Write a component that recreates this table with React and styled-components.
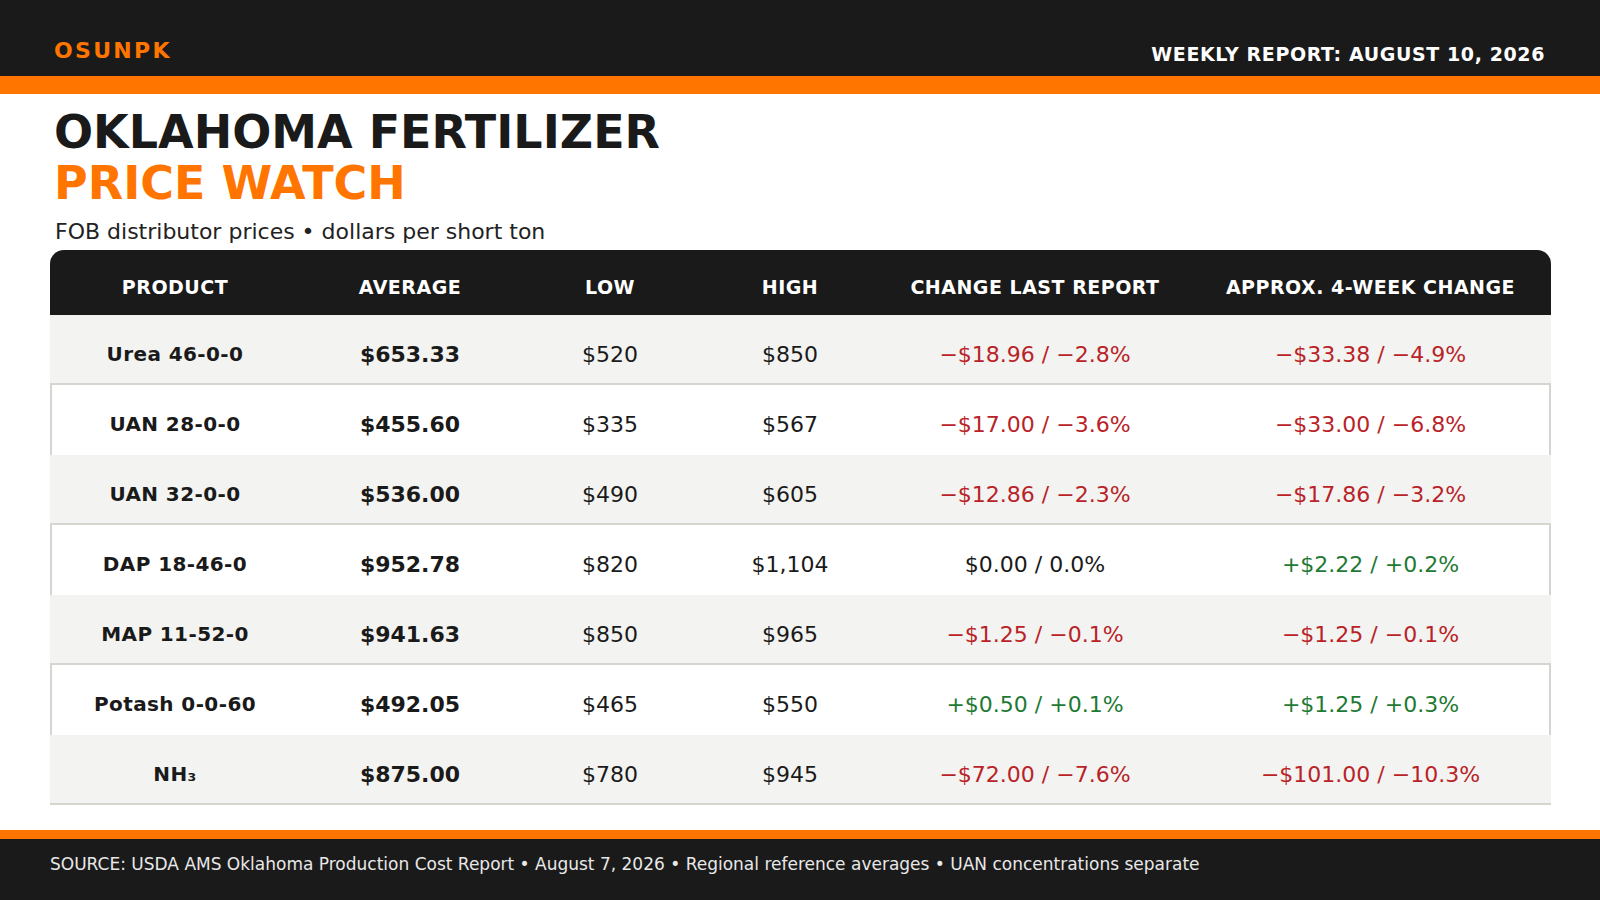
import React from 'react';
import styled, { createGlobalStyle } from 'styled-components';

const GlobalStyle = createGlobalStyle`
  * { box-sizing: border-box; }
  html, body { margin: 0; padding: 0; background: #ffffff; }
  body { font-family: "DejaVu Sans", Verdana, sans-serif; color: #1a1a1a; }
`;

const COLS = '250fr 220fr 180fr 180fr 310fr 361fr';

const tones = {
  down: '#b92328',
  up: '#1f7a34',
  flat: '#1a1a1a',
};

const Page = styled.div`
  width: 1600px;
  height: 900px;
  display: flex;
  flex-direction: column;
`;

const TopBar = styled.header`
  height: 94px;
  background: #1a1a1a;
  border-bottom: 18px solid #ff7500;
  display: flex;
  justify-content: space-between;
  align-items: flex-start;
  padding: 38px 55px 0 54px;
`;

const Brand = styled.div`
  color: #ff7500;
  font-size: 22px;
  font-weight: 700;
  letter-spacing: 2.3px;
`;

const ReportDate = styled.div`
  margin-top: 5px;
  color: #ffffff;
  font-size: 19px;
  font-weight: 700;
  letter-spacing: 0.6px;
`;

const Main = styled.main`
  flex: 1;
  padding: 12.5px 49px 0 50px;
`;

const Title = styled.h1`
  margin: 0 0 0 4px;
  font-size: 46px;
  line-height: 51px;
  font-weight: 700;
  color: #1a1a1a;
`;

const Accent = styled.span`
  display: block;
  color: #ff7500;
`;

const Subtitle = styled.p`
  margin: 10.5px 0 0 5px;
  font-size: 22px;
  color: #222222;
`;

const Table = styled.div`
  margin-top: 6px;
  width: 1501px;
`;

const HeadRow = styled.div`
  display: grid;
  grid-template-columns: ${COLS};
  align-items: center;
  height: 65px;
  padding-top: 8px;
  background: #1a1a1a;
  border-radius: 14px 14px 0 0;
`;

const HeadCell = styled.div`
  text-align: center;
  color: #ffffff;
  font-size: 19px;
  font-weight: 700;
  letter-spacing: 0.5px;
`;

const Row = styled.div`
  display: grid;
  grid-template-columns: ${COLS};
  align-items: center;
  height: 70px;
  padding-top: ${(p) => (p.$shaded ? '10px' : '8px')};
  background: ${(p) => (p.$shaded ? '#f3f3f1' : '#ffffff')};
  border-bottom: ${(p) => (p.$shaded ? '2px solid #d6d5d0' : 'none')};
  box-shadow: ${(p) => (p.$shaded ? 'none' : 'inset 2px 0 0 #d6d5d0, inset -2px 0 0 #d6d5d0')};
`;

const Product = styled.div`
  text-align: center;
  font-size: 20px;
  font-weight: 700;
  letter-spacing: 0.4px;
  color: #1a1a1a;
`;

const Cell = styled.div`
  text-align: center;
  font-size: 22px;
  font-weight: ${(p) => (p.$bold ? 700 : 400)};
  color: ${(p) => tones[p.$tone] || '#1a1a1a'};
`;

const Footer = styled.footer`
  height: 70px;
  background: #1a1a1a;
  border-top: 9px solid #ff7500;
  padding: 15px 50px 0;
  color: #e8e8e8;
  font-size: 17px;
`;

const headers = ['PRODUCT', 'AVERAGE', 'LOW', 'HIGH', 'CHANGE LAST REPORT', 'APPROX. 4-WEEK CHANGE'];

const rows = [
  { name: 'Urea 46-0-0', avg: '$653.33', low: '$520', high: '$850', last: '−$18.96 / −2.8%', lastTone: 'down', month: '−$33.38 / −4.9%', monthTone: 'down' },
  { name: 'UAN 28-0-0', avg: '$455.60', low: '$335', high: '$567', last: '−$17.00 / −3.6%', lastTone: 'down', month: '−$33.00 / −6.8%', monthTone: 'down' },
  { name: 'UAN 32-0-0', avg: '$536.00', low: '$490', high: '$605', last: '−$12.86 / −2.3%', lastTone: 'down', month: '−$17.86 / −3.2%', monthTone: 'down' },
  { name: 'DAP 18-46-0', avg: '$952.78', low: '$820', high: '$1,104', last: '$0.00 / 0.0%', lastTone: 'flat', month: '+$2.22 / +0.2%', monthTone: 'up' },
  { name: 'MAP 11-52-0', avg: '$941.63', low: '$850', high: '$965', last: '−$1.25 / −0.1%', lastTone: 'down', month: '−$1.25 / −0.1%', monthTone: 'down' },
  { name: 'Potash 0-0-60', avg: '$492.05', low: '$465', high: '$550', last: '+$0.50 / +0.1%', lastTone: 'up', month: '+$1.25 / +0.3%', monthTone: 'up' },
  { name: 'NH₃', avg: '$875.00', low: '$780', high: '$945', last: '−$72.00 / −7.6%', lastTone: 'down', month: '−$101.00 / −10.3%', monthTone: 'down' },
];

export default function App() {
  return (
    <Page>
      <GlobalStyle />
      <TopBar>
        <Brand>OSUNPK</Brand>
        <ReportDate>WEEKLY REPORT: AUGUST 10, 2026</ReportDate>
      </TopBar>
      <Main>
        <Title>
          OKLAHOMA FERTILIZER
          <Accent>PRICE WATCH</Accent>
        </Title>
        <Subtitle>FOB distributor prices • dollars per short ton</Subtitle>
        <Table>
          <HeadRow>
            {headers.map((h) => (
              <HeadCell key={h}>{h}</HeadCell>
            ))}
          </HeadRow>
          {rows.map((r, i) => (
            <Row key={r.name} $shaded={i % 2 === 0}>
              <Product>{r.name}</Product>
              <Cell $bold>{r.avg}</Cell>
              <Cell>{r.low}</Cell>
              <Cell>{r.high}</Cell>
              <Cell $tone={r.lastTone}>{r.last}</Cell>
              <Cell $tone={r.monthTone}>{r.month}</Cell>
            </Row>
          ))}
        </Table>
      </Main>
      <Footer>
        SOURCE: USDA AMS Oklahoma Production Cost Report • August 7, 2026 • Regional reference averages • UAN concentrations separate
      </Footer>
    </Page>
  );
}
